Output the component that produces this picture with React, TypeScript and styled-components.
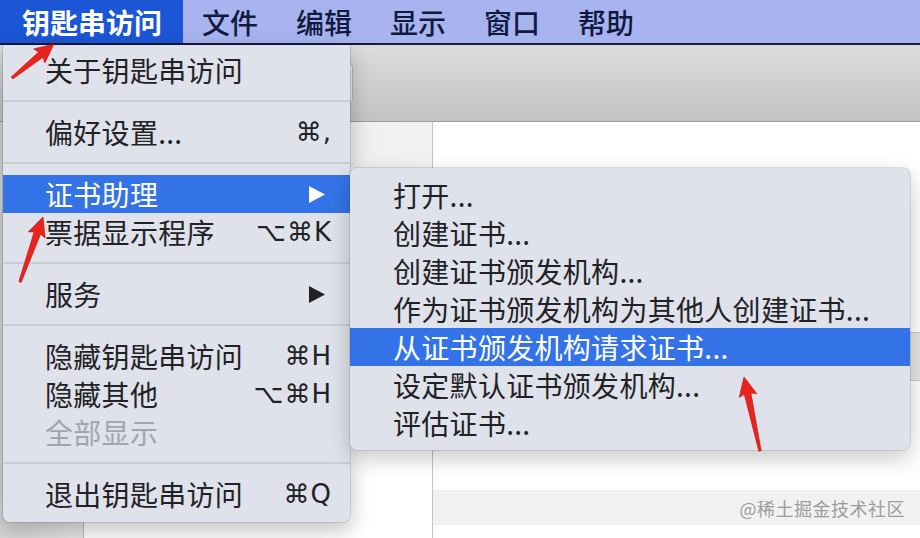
import React from "react";
import styled, { createGlobalStyle, css } from "styled-components";

const GlobalStyle = createGlobalStyle`
  html, body { margin: 0; padding: 0; background: #fff; }
  body {
    width: 920px; height: 538px; overflow: hidden;
    font-family: "Noto Sans CJK SC", "Noto Sans", sans-serif;
  }
  * { box-sizing: border-box; }
`;

const Screen = styled.div`
  position: relative;
  width: 920px;
  height: 538px;
  overflow: hidden;
  display: flex;
  flex-direction: column;
  background: #fff;
`;

const MenuBar = styled.div`
  height: 45px;
  flex: none;
  display: flex;
  align-items: stretch;
  background: #a7b4ef;
  border-bottom: 2px solid #161a3d;
`;

const BarItem = styled.div<{ $active?: boolean; $first?: boolean }>`
  display: flex;
  align-items: center;
  padding: 0 19px 0;
  font-size: 28px;
  font-weight: 500;
  line-height: 1;
  color: #111a3e;
  ${(p) => p.$first && css`padding: 0 21px 0 22px;`}
  ${(p) =>
    p.$active &&
    css`
      background: #1b56d6;
      color: #fff;
      font-weight: 700;
    `}
`;

const Window = styled.div`
  flex: 1;
  min-height: 0;
  display: flex;
  flex-direction: column;
`;

const Toolbar = styled.div`
  height: 77px;
  flex: none;
  display: flex;
  align-items: center;
  padding-left: 200px;
  background: linear-gradient(#dcdcdc, #c3c3c3);
  border-bottom: 1px solid #9c9c9c;
`;

const ToolControl = styled.div`
  width: 153px;
  height: 43px;
  border-radius: 6px;
  background: linear-gradient(#f1f1f1, #e3e3e3);
  border: 1px solid #b4b4b4;
`;

const Content = styled.div`
  flex: 1;
  min-height: 0;
  display: flex;
`;

const Sidebar = styled.div`
  width: 84px;
  flex: none;
  background: linear-gradient(to right, #d5d5d5, #e7e7e7);
  border-right: 1px solid #b9b9b9;
`;

const MiddleColumn = styled.div`
  width: 349px;
  flex: none;
  display: flex;
  flex-direction: column;
  background: #fff;
  border-right: 1px solid #c4c4c4;
`;

const ColumnHeader = styled.div`
  height: 46px;
  background: linear-gradient(to right, #e6e6e6, #f2f2f2);
`;

const List = styled.div`
  flex: 1;
  display: flex;
  flex-direction: column;
`;

const ListRow = styled.div<{ $h: number; $tone?: "white" | "gray" | "stripe" }>`
  height: ${(p) => p.$h}px;
  flex: none;
  display: flex;
  align-items: center;
  justify-content: flex-end;
  padding-right: 15px;
  background: #fff;
  ${(p) =>
    p.$tone === "gray" &&
    css`
      background: #e4e4e4;
      border-top: 1px solid #c6c6c6;
      border-bottom: 1px solid #c6c6c6;
    `}
  ${(p) => p.$tone === "stripe" && css`background: #f1f1f1;`}
`;

const Watermark = styled.span`
  font-size: 18px;
  color: #9c9c9c;
  letter-spacing: 0.5px;
`;

const Menu = styled.div<{ $sub?: boolean }>`
  position: absolute;
  display: flex;
  flex-direction: column;
  background: #dfe2ea;
  z-index: 5;
  ${(p) =>
    p.$sub
      ? css`
          left: 350px;
          top: 168px;
          width: 560px;
          padding: 8px 0;
          border-radius: 7px;
          box-shadow: 0 8px 22px rgba(0, 0, 0, 0.22), 0 0 0 1px rgba(0, 0, 0, 0.1);
        `
      : css`
          left: 3px;
          top: 45px;
          width: 347px;
          padding: 6px 0 9px;
          border-radius: 0 0 7px 7px;
          box-shadow: 0 8px 22px rgba(0, 0, 0, 0.25), 0 0 0 1px rgba(0, 0, 0, 0.1);
        `}
`;

const MenuRow = styled.div<{ $hl?: boolean; $disabled?: boolean; $sub?: boolean }>`
  height: 38px;
  flex: none;
  display: flex;
  align-items: center;
  padding: 0 18px 0 ${(p) => (p.$sub ? 43 : 42)}px;
  font-size: 28px;
  line-height: 1;
  color: ${(p) => (p.$disabled ? "#a3a5ad" : "#222226")};
  ${(p) =>
    p.$hl &&
    css`
      background: #3473e7;
      color: #fff;
    `}
`;

const Label = styled.span`
  flex: 1;
  white-space: nowrap;
  letter-spacing: 0.3px;
`;

const Shortcut = styled.span`
  font-family: "DejaVu Sans", "Noto Sans", sans-serif;
  font-size: 26px;
  letter-spacing: 1px;
  white-space: nowrap;
`;

const Separator = styled.div`
  height: 24px;
  flex: none;
  display: flex;
  align-items: center;
  &::after {
    content: "";
    flex: 1;
    height: 2px;
    background: #cacdd6;
  }
`;

const SubArrow = styled.svg`
  width: 18px;
  height: 17px;
  margin-right: 6px;
  fill: currentColor;
`;

const Overlay = styled.svg`
  position: absolute;
  left: 0;
  top: 0;
  width: 920px;
  height: 538px;
  pointer-events: none;
  z-index: 10;
`;

type Item =
  | { sep: true }
  | { label: string; sc?: string; sub?: boolean; hl?: boolean; disabled?: boolean };

const mainItems: Item[] = [
  { label: "关于钥匙串访问" },
  { sep: true },
  { label: "偏好设置...", sc: "⌘," },
  { sep: true },
  { label: "证书助理", sub: true, hl: true },
  { label: "票据显示程序", sc: "⌥⌘K" },
  { sep: true },
  { label: "服务", sub: true },
  { sep: true },
  { label: "隐藏钥匙串访问", sc: "⌘H" },
  { label: "隐藏其他", sc: "⌥⌘H" },
  { label: "全部显示", disabled: true },
  { sep: true },
  { label: "退出钥匙串访问", sc: "⌘Q" },
];

const subItems = [
  "打开...",
  "创建证书...",
  "创建证书颁发机构...",
  "作为证书颁发机构为其他人创建证书...",
  "从证书颁发机构请求证书...",
  "设定默认证书颁发机构...",
  "评估证书...",
];

const barItems = ["钥匙串访问", "文件", "编辑", "显示", "窗口", "帮助"];

function Arrow({ x1, y1, x2, y2 }: { x1: number; y1: number; x2: number; y2: number }) {
  const dx = x2 - x1;
  const dy = y2 - y1;
  const L = Math.sqrt(dx * dx + dy * dy);
  const a = (Math.atan2(dy, dx) * 180) / Math.PI;
  const pts = [
    [0, -1.2],
    [L - 17, -3.4],
    [L - 19, -9],
    [L, 0],
    [L - 19, 9],
    [L - 17, 3.4],
    [0, 1.2],
  ]
    .map((p) => p.join(","))
    .join(" ");
  return (
    <polygon
      points={pts}
      transform={`translate(${x1} ${y1}) rotate(${a})`}
      fill="#e8221d"
      stroke="#c41512"
      strokeWidth={0.6}
      strokeLinejoin="round"
    />
  );
}

export default function App() {
  return (
    <>
      <GlobalStyle />
      <Screen>
        <MenuBar>
          {barItems.map((t, i) => (
            <BarItem key={t} $first={i === 0} $active={i === 0}>
              {t}
            </BarItem>
          ))}
        </MenuBar>
        <Window>
          <Toolbar>
            <ToolControl />
          </Toolbar>
          <Content>
            <Sidebar />
            <MiddleColumn>
              <ColumnHeader />
            </MiddleColumn>
            <List>
              <ListRow $h={210} />
              <ListRow $h={49} $tone="gray" />
              <ListRow $h={109} />
              <ListRow $h={35} $tone="stripe">
                <Watermark>@稀土掘金技术社区</Watermark>
              </ListRow>
              <ListRow $h={13} />
            </List>
          </Content>
        </Window>

        <Menu>
          {mainItems.map((it, i) =>
            "sep" in it ? (
              <Separator key={i} />
            ) : (
              <MenuRow key={i} $hl={it.hl} $disabled={it.disabled}>
                <Label>{it.label}</Label>
                {it.sc && <Shortcut>{it.sc}</Shortcut>}
                {it.sub && (
                  <SubArrow viewBox="0 0 18 17">
                    <polygon points="1,0 17,8.5 1,17" />
                  </SubArrow>
                )}
              </MenuRow>
            )
          )}
        </Menu>

        <Menu $sub>
          {subItems.map((t, i) => (
            <MenuRow key={t} $sub $hl={i === 4}>
              <Label>{t}</Label>
            </MenuRow>
          ))}
        </Menu>

        <Overlay viewBox="0 0 920 538">
          <Arrow x1={12} y1={78} x2={54} y2={44} />
          <Arrow x1={20} y1={282} x2={43} y2={217} />
          <Arrow x1={760} y1={451} x2={744} y2={377} />
        </Overlay>
      </Screen>
    </>
  );
}
